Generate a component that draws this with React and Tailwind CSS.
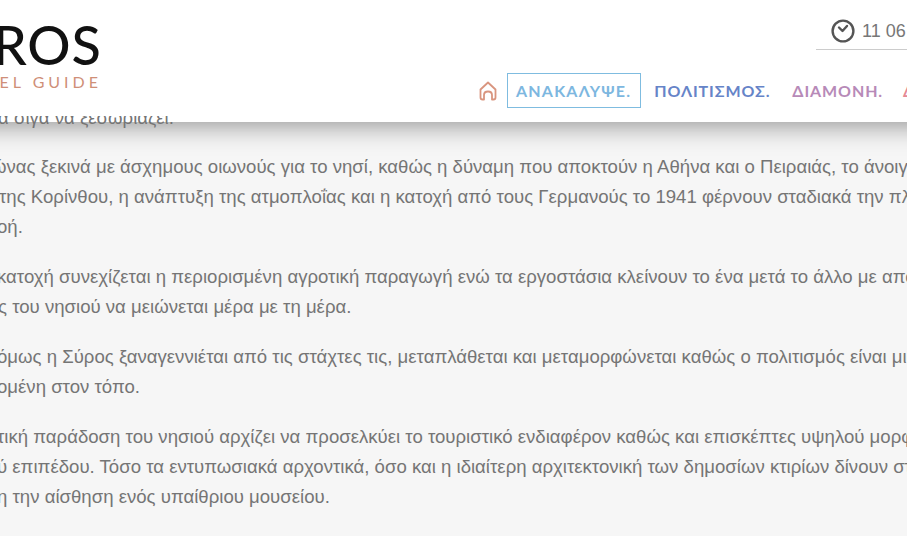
import React from "react";

const PARAGRAPHS = [
  [
    { cls: "ml-[-8px]", text: "ώνας ξεκινά με άσχημους οιωνούς για το νησί, καθώς η δύναμη που αποκτούν η Αθήνα και ο Πειραιάς, το άνοιγμα" },
    { cls: "ml-[-1px]", text: "της Κορίνθου, η ανάπτυξη της ατμοπλοΐας και η κατοχή από τους Γερμανούς το 1941 φέρνουν σταδιακά την πλήρη" },
    { cls: "ml-[-3px]", text: "οή." },
  ],
  [
    { cls: "ml-[-3px]", text: "κατοχή συνεχίζεται η περιορισμένη αγροτική παραγωγή ενώ τα εργοστάσια κλείνουν το ένα μετά το άλλο με αποτέλεσμα" },
    { cls: "ml-[-2px]", text: "ς του νησιού να μειώνεται μέρα με τη μέρα." },
  ],
  [
    { cls: "ml-[-3px]", text: "όμως η Σύρος ξαναγεννιέται από τις στάχτες τις, μεταπλάθεται και μεταμορφώνεται καθώς ο πολιτισμός είναι μια" },
    { cls: "ml-[-3px]", text: "ομένη στον τόπο." },
  ],
  [
    { cls: "ml-[-3px]", text: "τική παράδοση του νησιού αρχίζει να προσελκύει το τουριστικό ενδιαφέρον καθώς και επισκέπτες υψηλού μορφωτικού" },
    { cls: "ml-[-3px]", text: "ύ επιπέδου. Τόσο τα εντυπωσιακά αρχοντικά, όσο και η ιδιαίτερη αρχιτεκτονική των δημοσίων κτιρίων δίνουν στον" },
    { cls: "ml-[-3px]", text: "η την αίσθηση ενός υπαίθριου μουσείου." },
  ],
];

const ClockIcon = () => (
  <svg width="24" height="24" viewBox="0 0 24 24" fill="none" stroke="#555" strokeWidth="2.4" strokeLinecap="round" strokeLinejoin="round">
    <circle cx="12" cy="12" r="10.4" />
    <path d="M8 8.5 L11.5 12 L16 7" />
  </svg>
);

const HomeIcon = () => (
  <svg width="20" height="20" viewBox="0 0 20 20" fill="none" stroke="#d9957f" strokeWidth="1.8" strokeLinecap="round" strokeLinejoin="round">
    <path d="M2.5 8.5 L10 1.5 L17.5 8.5 V16.5 Q17.5 18.5 15.5 18.5 H14 V14 Q14 10.5 10 10.5 Q6 10.5 6 14 V18.5 H4.5 Q2.5 18.5 2.5 16.5 Z" />
  </svg>
);

const App = () => {
  return (
    <div className="h-[536px] w-[907px] overflow-hidden bg-[#f6f6f6] font-['Liberation_Sans',sans-serif]">
      <header className="relative z-10 ml-[-60px] flex h-[122px] w-[1030px] bg-white pl-[60px] shadow-[0_2px_26px_rgba(0,0,0,0.45)]">
        <div className="flex h-full w-[102px] shrink-0 flex-col items-end overflow-hidden pt-[18px]">
          <span className="font-['Lato',sans-serif] text-[54px] leading-[54px] font-medium tracking-[1px] whitespace-nowrap text-[#111]">ROS</span>
          <span className="mt-[1px] font-['Lato',sans-serif] text-[16px] leading-[18px] tracking-[4px] whitespace-nowrap text-[#cf8f78]">EL GUIDE</span>
        </div>
        <div className="ml-[376px] flex flex-col items-start">
          <div className="mt-[19px] ml-[338px] flex w-[120px] items-center gap-[7px] border-b border-[#ccc] pb-[6px] pl-[15px] text-[18px] leading-[24px] whitespace-nowrap text-[#777]">
            <ClockIcon />
            <span>11 06</span>
          </div>
          <nav className="mt-[23px] flex items-center font-['Lato',sans-serif] text-[16px] font-bold tracking-[0.9px] whitespace-nowrap">
            <HomeIcon />
            <span className="ml-[9px] border border-[#7fbce0] py-[7px] pr-[9px] pl-[8px] leading-[19px] tracking-[1.2px] text-[#7db7e0]">ΑΝΑΚΑΛΥΨΕ.</span>
            <span className="ml-[13px] text-[#6684c8]">ΠΟΛΙΤΙΣΜΟΣ.</span>
            <span className="ml-[22px] text-[#b78ab8]">ΔΙΑΜΟΝΗ.</span>
            <span className="ml-[20px] text-[#e58a96]">ΔΡΑΣΗ.</span>
          </nav>
        </div>
      </header>
      <main className="flex flex-col gap-[20px] text-[18.6px] leading-[30px] text-[#757575]">
        <div className="relative z-20 mt-[-6px] h-[16px] overflow-hidden">
          <p className="mt-[-13px] ml-[-2px] whitespace-nowrap">α σιγά να ξεσωριάζει.</p>
        </div>
        {PARAGRAPHS.map((lines, i) => (
          <p key={i}>
            {lines.map((line, j) => (
              <span key={j} className={`block whitespace-nowrap ${line.cls}`}>{line.text}</span>
            ))}
          </p>
        ))}
      </main>
    </div>
  );
};

export default App;
